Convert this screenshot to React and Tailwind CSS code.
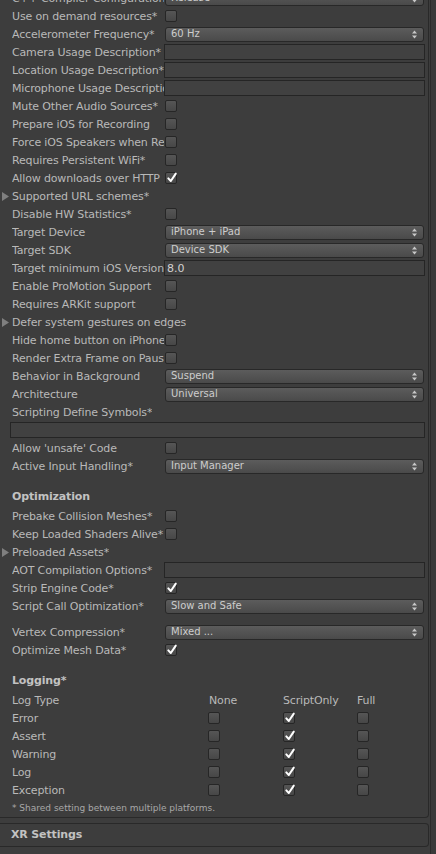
import React from "react";

const labelCls = "text-[11px] text-[#b9b9b9] whitespace-nowrap overflow-hidden leading-none tracking-[-0.15px]";

function Check({ on }) {
  return (
    <span className="relative block w-[12px] h-[12px] rounded-[2px] border border-[#262626] bg-linear-to-b from-[#565656] to-[#474747]">
      {on && (
        <svg className="absolute left-[0px] top-[-2px]" width="12" height="13" viewBox="0 0 12 13">
          <path d="M2.3 7.4 L4.8 10 L9.8 2.6" fill="none" stroke="#ffffff" strokeWidth="2" strokeLinecap="round" strokeLinejoin="round" />
        </svg>
      )}
    </span>
  );
}

function Popup({ value }) {
  return (
    <div className="ml-px flex items-center justify-between w-[259px] h-[15px] pl-[5px] pr-[6px] rounded-[3px] border border-[#282828] bg-linear-to-b from-[#5c5c5c] to-[#4a4a4a] text-[10px] text-[#cdcdcd] leading-none">
      <span>{value}</span>
      <svg width="5" height="9" viewBox="0 0 5 9">
        <path d="M0 3.6 L2.5 0.6 L5 3.6Z M0 5.4 L2.5 8.4 L5 5.4Z" fill="#c8c8c8" />
      </svg>
    </div>
  );
}

function Field({ value = "", wide }) {
  return (
    <div
      className={
        (wide ? "w-[415px]" : "w-[261px]") +
        " h-[16px] flex items-center px-[2px] border border-[#252525] bg-[#414141] text-[11px] text-[#d2d2d2] leading-none"
      }
    >
      {value}
    </div>
  );
}

// a label + control line; foldouts have no control, so their label runs on
function Row({ text, fold, children }) {
  return (
    <div className="flex items-center h-[18px]">
      <div className="w-[12px] shrink-0 flex items-center pl-[2px]">
        {fold && (
          <svg width="7" height="9" viewBox="0 0 7 9">
            <path d="M0 0 L7 4.5 L0 9Z" fill="#7f7f7f" />
          </svg>
        )}
      </div>
      <div className={(children ? "w-[152px] shrink-0 " : "") + labelCls}>{text}</div>
      {children}
    </div>
  );
}

function Header({ text, className = "" }) {
  return (
    <div className={"flex items-center h-[20px] pl-[12px] text-[11px] font-bold text-[#c2c2c2] tracking-[-0.15px] " + className}>
      {text}
    </div>
  );
}

const logRows = ["Error", "Assert", "Warning", "Log", "Exception"];

const box = <span className="ml-px"><Check /></span>;
const boxOn = <span className="ml-px"><Check on /></span>;

export default function App() {
  return (
    <div className="w-[436px] h-[854px] overflow-hidden flex bg-[#3d3d3d] font-['DejaVu_Sans',sans-serif]">
      <div className="w-[430px] flex flex-col">
        {/* main settings box */}
        <div className="w-[429px] border-r border-b border-[#292929] rounded-br-[4px] -mt-[11px]">
          <Row text="C++ Compiler Configuration"><Popup value="Release" /></Row>
          <Row text="Use on demand resources*">{box}</Row>
          <Row text="Accelerometer Frequency*"><Popup value="60 Hz" /></Row>
          <Row text="Camera Usage Description*"><Field /></Row>
          <Row text="Location Usage Description*"><Field /></Row>
          <Row text="Microphone Usage Description*"><Field /></Row>
          <Row text="Mute Other Audio Sources*">{box}</Row>
          <Row text="Prepare iOS for Recording">{box}</Row>
          <Row text="Force iOS Speakers when Recording">{box}</Row>
          <Row text="Requires Persistent WiFi*">{box}</Row>
          <Row text="Allow downloads over HTTP">{boxOn}</Row>
          <Row text="Supported URL schemes*" fold />
          <Row text="Disable HW Statistics*">{box}</Row>
          <Row text="Target Device"><Popup value="iPhone + iPad" /></Row>
          <Row text="Target SDK"><Popup value="Device SDK" /></Row>
          <Row text="Target minimum iOS Version"><Field value="8.0" /></Row>
          <Row text="Enable ProMotion Support">{box}</Row>
          <Row text="Requires ARKit support">{box}</Row>
          <Row text="Defer system gestures on edges" fold />
          <Row text="Hide home button on iPhone X">{box}</Row>
          <Row text="Render Extra Frame on Pause">{box}</Row>
          <Row text="Behavior in Background"><Popup value="Suspend" /></Row>
          <Row text="Architecture"><Popup value="Universal" /></Row>
          <Row text="Scripting Define Symbols*" />
          <div className="flex items-center h-[18px] pl-[10px]">
            <Field wide />
          </div>
          <Row text="Allow 'unsafe' Code">{box}</Row>
          <Row text="Active Input Handling*"><Popup value="Input Manager" /></Row>

          <Header text="Optimization" className="mt-[12px]" />
          <Row text="Prebake Collision Meshes*">{box}</Row>
          <Row text="Keep Loaded Shaders Alive*">{box}</Row>
          <Row text="Preloaded Assets*" fold />
          <Row text="AOT Compilation Options*"><Field /></Row>
          <Row text="Strip Engine Code*">{boxOn}</Row>
          <Row text="Script Call Optimization*"><Popup value="Slow and Safe" /></Row>
          <div className="h-[8px]" />
          <Row text="Vertex Compression*"><Popup value="Mixed ..." /></Row>
          <Row text="Optimize Mesh Data*">{boxOn}</Row>

          <Header text="Logging*" className="mt-[12px]" />
          <div className="flex items-center h-[18px] pl-[12px] text-[11px] text-[#b9b9b9] leading-none tracking-[-0.15px]">
            <div className="w-[197px]">Log Type</div>
            <div className="w-[74px]">None</div>
            <div className="w-[74px]">ScriptOnly</div>
            <div>Full</div>
          </div>
          {logRows.map((name) => (
            <div key={name} className="flex items-center h-[18px] pl-[12px] text-[11px] text-[#b9b9b9] leading-none tracking-[-0.15px]">
              <div className="w-[196px]">{name}</div>
              <div className="w-[75px]"><Check /></div>
              <div className="w-[74px]"><Check on /></div>
              <div><Check /></div>
            </div>
          ))}
          <div className="flex items-center h-[18px] pl-[12px] text-[9px] text-[#a8a8a8] leading-none">
            * Shared setting between multiple platforms.
          </div>
        </div>

        {/* collapsed XR section */}
        <div className="mt-[5px] w-[429px] h-[24px] flex items-center pl-[11px] border-t border-r border-b border-[#292929] rounded-r-[4px] text-[11px] font-bold text-[#c2c2c2] tracking-[-0.15px]">
          XR Settings
        </div>
      </div>
      <div className="w-px bg-[#2a2a2a]" />
      <div className="flex-1 bg-[#393939]" />
    </div>
  );
}
